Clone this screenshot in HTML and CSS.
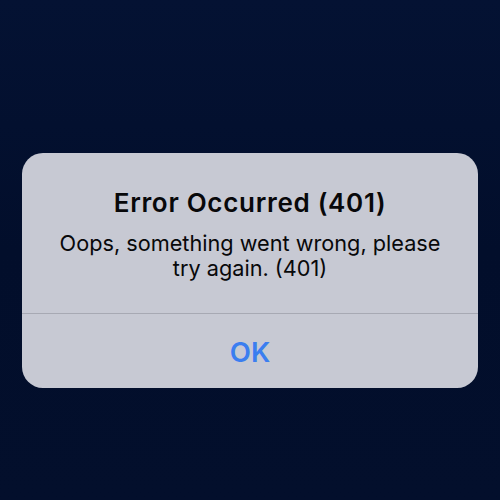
FILE: index.html
```html
<!DOCTYPE html>
<html lang="en">
<head>
  <meta charset="UTF-8" />
  <meta name="viewport" content="width=device-width, initial-scale=1.0" />
  <title>Error</title>
  <link rel="stylesheet" href="styles.css">
</head>
<body>
  <div id="screen">
    <!-- alert dialog -->
    <div class="alert" role="alertdialog">
      <div class="alert-body">
        <div class="alert-title">Error Occurred (401)</div>
        <div class="alert-message">Oops, something went wrong, please<br>try again. (401)</div>
      </div>
      <button class="alert-button">OK</button>
    </div>
  </div>
</body>
</html>
```

FILE: styles.css
```css
body {
  margin: 0;
  overflow: hidden;
  font-family: Inter, "Noto Sans", sans-serif;
}

#screen {
  width: 100vw;
  height: 100vh;
  box-sizing: border-box;
  padding-top: 40px;
  display: flex;
  align-items: center;
  justify-content: center;
  background: linear-gradient(180deg, #041233 0%, #020e2b 50%, #030f2c 100%);
}

.alert {
  width: 456px;
  background: #c7c9d3;
  border-radius: 21px;
  overflow: hidden;
  display: flex;
  flex-direction: column;
}

.alert-body {
  padding: 35px 10px 32px;
  text-align: center;
  color: #08080a;
}

.alert-title {
  font-size: 26px;
  font-weight: 600;
  letter-spacing: 0.7px;
  line-height: 30px;
  margin-bottom: 13px;
}

.alert-message {
  font-size: 21.7px;
  line-height: 25px;
}

.alert-button {
  border: 0;
  border-top: 1px solid #a7a9b3;
  background: transparent;
  height: 75px;
  font-family: inherit;
  font-size: 27.5px;
  font-weight: 600;
  color: #3b7ef0;
  padding: 3px 0 0;
}
```
